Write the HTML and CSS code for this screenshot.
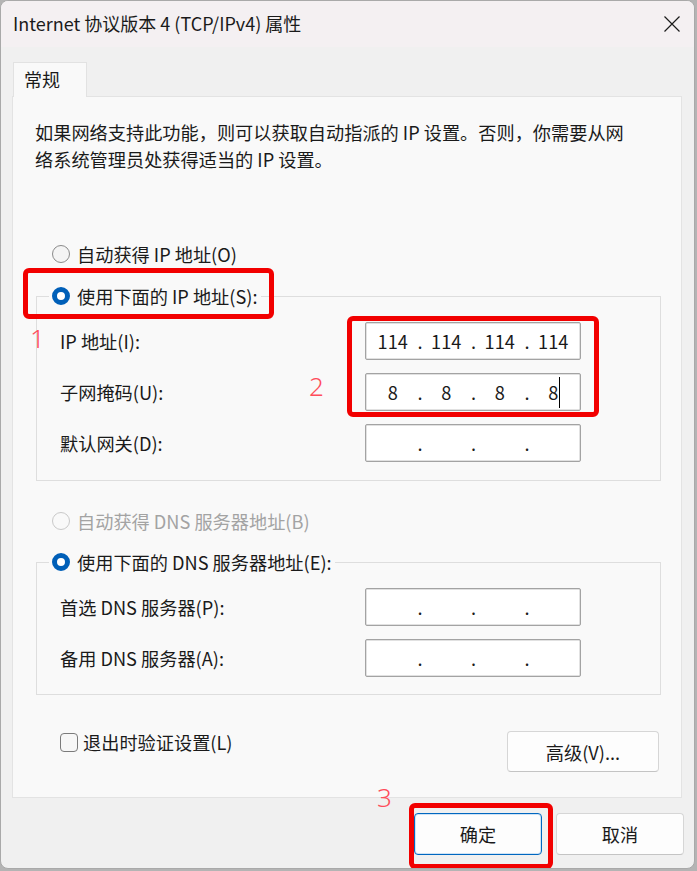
FILE: index.html
```html
<!doctype html>
<html lang="zh-CN">
<head>
  <meta charset="utf-8">
  <title>Internet 协议版本 4 (TCP/IPv4) 属性</title>
  <link rel="stylesheet" href="styles.css">
</head>
<body>
  <div class="window">
    <div class="titlebar">
      <span class="title">Internet 协议版本 4 (TCP/IPv4) 属性</span>
      <svg class="close" width="16" height="16" viewBox="0 0 16 16">
        <path d="M0.5 0.5 L15.5 15.5 M15.5 0.5 L0.5 15.5" stroke="#1b1b1b" stroke-width="1.2" fill="none"/>
      </svg>
    </div>

    <div class="content">
      <div class="tabs">
        <div class="tab">常规</div>
      </div>
      <div class="panel">
        <p class="intro">如果网络支持此功能，则可以获取自动指派的 IP 设置。否则，你需要从网<br>络系统管理员处获得适当的 IP 设置。</p>

        <div class="option option-first">
          <span class="radio"></span>自动获得 IP 地址(O)
        </div>
        <fieldset class="group group-ip">
          <legend><span class="radio checked"></span>使用下面的 IP 地址(S):</legend>
          <div class="row">
            <span>IP 地址(I):</span>
            <div class="ipbox">
              <span>114</span><i>.</i><span>114</span><i>.</i><span>114</span><i>.</i><span>114</span>
            </div>
          </div>
          <div class="row">
            <span>子网掩码(U):</span>
            <div class="ipbox">
              <span>8</span><i>.</i><span>8</span><i>.</i><span>8</span><i>.</i><span>8<b class="caret"></b></span>
            </div>
          </div>
          <div class="row">
            <span>默认网关(D):</span>
            <div class="ipbox">
              <span></span><i>.</i><span></span><i>.</i><span></span><i>.</i><span></span>
            </div>
          </div>
        </fieldset>

        <div class="option option-dns disabled">
          <span class="radio"></span>自动获得 DNS 服务器地址(B)
        </div>
        <fieldset class="group group-dns">
          <legend><span class="radio checked"></span>使用下面的 DNS 服务器地址(E):</legend>
          <div class="row">
            <span>首选 DNS 服务器(P):</span>
            <div class="ipbox">
              <span></span><i>.</i><span></span><i>.</i><span></span><i>.</i><span></span>
            </div>
          </div>
          <div class="row">
            <span>备用 DNS 服务器(A):</span>
            <div class="ipbox">
              <span></span><i>.</i><span></span><i>.</i><span></span><i>.</i><span></span>
            </div>
          </div>
        </fieldset>

        <div class="footer-row">
          <div class="check"><span class="checkbox"></span>退出时验证设置(L)</div>
          <button class="btn btn-advanced">高级(V)...</button>
        </div>
      </div>

      <div class="actions">
        <button class="btn btn-default">确定</button>
        <button class="btn">取消</button>
      </div>
    </div>

    <!-- annotations -->
    <div class="mark mark-1"></div>
    <div class="mark mark-2"></div>
    <div class="mark mark-3"></div>
    <span class="num num-1">1</span>
    <span class="num num-2">2</span>
    <span class="num num-3">3</span>
  </div>
</body>
</html>
```

FILE: styles.css
```css
body {
  margin: 0;
  background: #b4b4b4;
  font-family: "Noto Sans CJK SC", "Noto Sans", sans-serif;
  color: #1a1a1a;
}

.window {
  position: relative;
  width: 693px;
  height: 867px;
  border: 1px solid #a9a9a9;
  border-radius: 8px;
  background: #f0f0f0;
  overflow: hidden;
}

.titlebar {
  display: flex;
  align-items: center;
  justify-content: space-between;
  height: 46px;
  padding: 0 14px 0 12px;
  background: #f4f0f2;
}

.title {
  font-size: 18px;
  margin-top: -2px;
}

.close {
  margin-top: -1px;
}

.content {
  padding: 15px 10px 0 11px;
}

.tabs {
  display: flex;
  height: 35px;
}

.tab {
  position: relative;
  z-index: 1;
  width: 74px;
  height: 35px;
  box-sizing: border-box;
  margin-left: 1px;
  padding: 2px 0 0 10px;
  border: 1px solid #e2e2e2;
  border-bottom: none;
  background: #f9f9f9;
  font-size: 18px;
  line-height: 28px;
}

.panel {
  height: 702px;
  box-sizing: border-box;
  margin-top: -1px;
  margin-right: 2px;
  padding: 22px 20px 0 22px;
  border: 1px solid #e3e3e3;
  background: #f9f9f9;
  font-size: 18.2px;
}

.intro {
  margin: 0;
  line-height: 27px;
}

.option {
  display: flex;
  align-items: center;
  height: 28px;
  margin-left: 17px;
}

.option-first {
  margin-top: 67px;
}

.option-dns {
  margin-top: 26px;
}

.disabled {
  color: #a3a3a3;
}

.radio {
  display: inline-block;
  flex: none;
  width: 18px;
  height: 18px;
  box-sizing: border-box;
  margin-right: 7px;
  border: 1px solid #8a8a8a;
  border-radius: 50%;
  background: #f4f4f4;
}

.disabled .radio {
  border-color: #c9c9c9;
  background: #f9f9f9;
}

.radio.checked {
  border: 5px solid #005fb8;
  background: #fff;
}

.group {
  margin: 14px 0 0 1px;
  padding: 12px 79px 18px 23px;
  border: 1px solid #dedede;
  min-width: 0;
}

.group-dns {
  margin-top: 13px;
  padding-top: 12px;
  padding-bottom: 17px;
}

.group legend {
  display: flex;
  align-items: center;
  height: 28px;
  margin-left: -11px;
  padding: 0 3px;
}

.row {
  display: flex;
  align-items: center;
  justify-content: space-between;
  height: 38px;
}

.row + .row {
  margin-top: 13px;
}

.ipbox {
  display: grid;
  grid-template-columns: 1fr auto 1fr auto 1fr auto 1fr;
  align-items: center;
  width: 216px;
  height: 38px;
  box-sizing: border-box;
  padding: 0 2px;
  border: 1px solid #a3a3a3;
  border-radius: 2px;
  background: #fff;
  box-shadow: inset 0 0 0 0.5px #c4c4c4;
}

.ipbox span {
  text-align: center;
  position: relative;
}

.ipbox i {
  font-style: normal;
  width: 4px;
  text-align: center;
}

.caret {
  position: absolute;
  top: -2px;
  margin-left: 1px;
  width: 1px;
  height: 31px;
  background: #000;
}

.footer-row {
  display: flex;
  justify-content: space-between;
  align-items: flex-start;
  margin-top: 36px;
  padding: 0 2px 0 25px;
}

.check {
  display: flex;
  align-items: center;
  height: 28px;
  margin-top: -3px;
}

.checkbox {
  display: inline-block;
  width: 18px;
  height: 19px;
  box-sizing: border-box;
  margin-right: 5px;
  border: 1px solid #7b7b7b;
  border-radius: 4px;
  background: #f7f7f7;
}

.btn {
  height: 41px;
  box-sizing: border-box;
  border: 1px solid #d6d6d6;
  border-bottom-color: #c4c4c4;
  border-radius: 4px;
  background: #fdfdfd;
  font-family: inherit;
  font-size: 18.2px;
  color: #1a1a1a;
  padding: 0;
}

.btn-advanced {
  width: 152px;
}

.actions {
  display: flex;
  justify-content: flex-end;
  gap: 14px;
  margin-top: 15px;
}

.actions .btn {
  width: 128px;
  height: 42px;
}

.btn-default {
  border: 1px solid #0067c0;
  box-shadow: inset 0 0 0 1px #cfe3f5;
}

/* red annotation frames */
.mark {
  position: absolute;
  box-sizing: border-box;
  border: 5px solid #f20000;
  border-radius: 6px;
}

.mark-1 {
  left: 22px;
  top: 267px;
  width: 251px;
  height: 51px;
}

.mark-2 {
  left: 346px;
  top: 315px;
  width: 252px;
  height: 101px;
}

.mark-3 {
  left: 408px;
  top: 802px;
  width: 144px;
  height: 66px;
}

.num {
  position: absolute;
  font-family: "Noto Sans", sans-serif;
  font-weight: 300;
  font-size: 26px;
  line-height: 1;
  color: #ff4d5b;
}

.num-1 {
  left: 29px;
  top: 324px;
}

.num-2 {
  left: 308px;
  top: 372px;
}

.num-3 {
  left: 376px;
  top: 783px;
}
```
